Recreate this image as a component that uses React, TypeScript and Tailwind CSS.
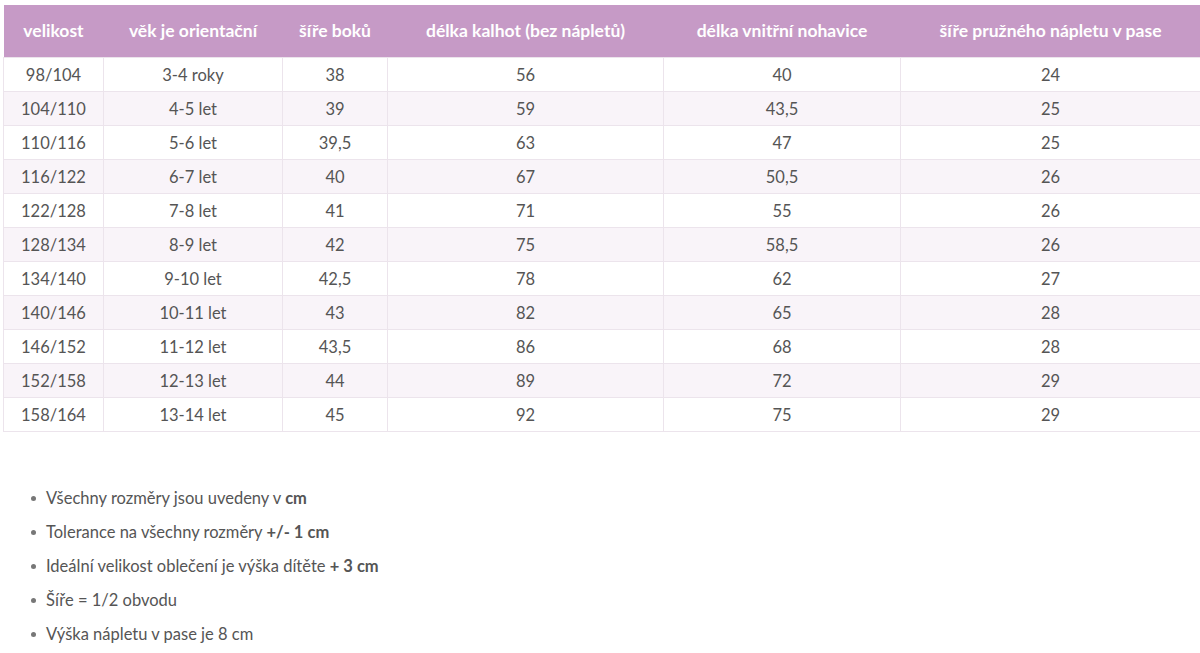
const HEAD = [
  "velikost",
  "věk je orientační",
  "šíře boků",
  "délka kalhot (bez nápletů)",
  "délka vnitřní nohavice",
  "šíře pružného nápletu v pase",
];

const ROWS = [
  ["98/104", "3-4 roky", "38", "56", "40", "24"],
  ["104/110", "4-5 let", "39", "59", "43,5", "25"],
  ["110/116", "5-6 let", "39,5", "63", "47", "25"],
  ["116/122", "6-7 let", "40", "67", "50,5", "26"],
  ["122/128", "7-8 let", "41", "71", "55", "26"],
  ["128/134", "8-9 let", "42", "75", "58,5", "26"],
  ["134/140", "9-10 let", "42,5", "78", "62", "27"],
  ["140/146", "10-11 let", "43", "82", "65", "28"],
  ["146/152", "11-12 let", "43,5", "86", "68", "28"],
  ["152/158", "12-13 let", "44", "89", "72", "29"],
  ["158/164", "13-14 let", "45", "92", "75", "29"],
];

const WIDTHS = ["w-[100px]", "w-[179px]", "w-[105px]", "w-[276px]", "w-[237px]", "w-[300px]"];

function Bullet({ children }: { children: React.ReactNode }) {
  return (
    <li className="flex items-center gap-[10px]">
      <span className="w-[5px] h-[5px] rounded-full bg-[#777]" />
      <span>{children}</span>
    </li>
  );
}

export default function App() {
  return (
    <div className="bg-white min-h-[653px] pt-[5px] pl-[3px] text-[#555] font-['Lato','Noto_Sans',sans-serif] text-[16.5px]">
      <table className="border-collapse table-fixed w-[1197px]">
        <thead>
          <tr className="bg-[#c69ac6] h-[52px]">
            {HEAD.map((h, i) => (
              <th key={h} className={`${WIDTHS[i]} text-white font-bold text-[17.5px] text-center`}>
                {h}
              </th>
            ))}
          </tr>
        </thead>
        <tbody>
          {ROWS.map((r, ri) => (
            <tr key={r[0]} className={`h-[34px] ${ri % 2 === 1 ? "bg-[#f9f4f9]" : "bg-white"}`}>
              {r.map((c, ci) => (
                <td key={ci} className="border border-[#ece4ec] text-center align-middle pt-[2px]">
                  {c}
                </td>
              ))}
            </tr>
          ))}
        </tbody>
      </table>

      <ul className="mt-[55px] pl-[28px] flex flex-col gap-[11px] leading-[23px]">
        <Bullet>Všechny rozměry jsou uvedeny v <b>cm</b></Bullet>
        <Bullet>Tolerance na všechny rozměry <b>+/- 1 cm</b></Bullet>
        <Bullet>Ideální velikost oblečení je výška dítěte <b>+ 3 cm</b></Bullet>
        <Bullet>Šíře = 1/2 obvodu</Bullet>
        <Bullet>Výška nápletu v pase je 8 cm</Bullet>
      </ul>
    </div>
  );
}
